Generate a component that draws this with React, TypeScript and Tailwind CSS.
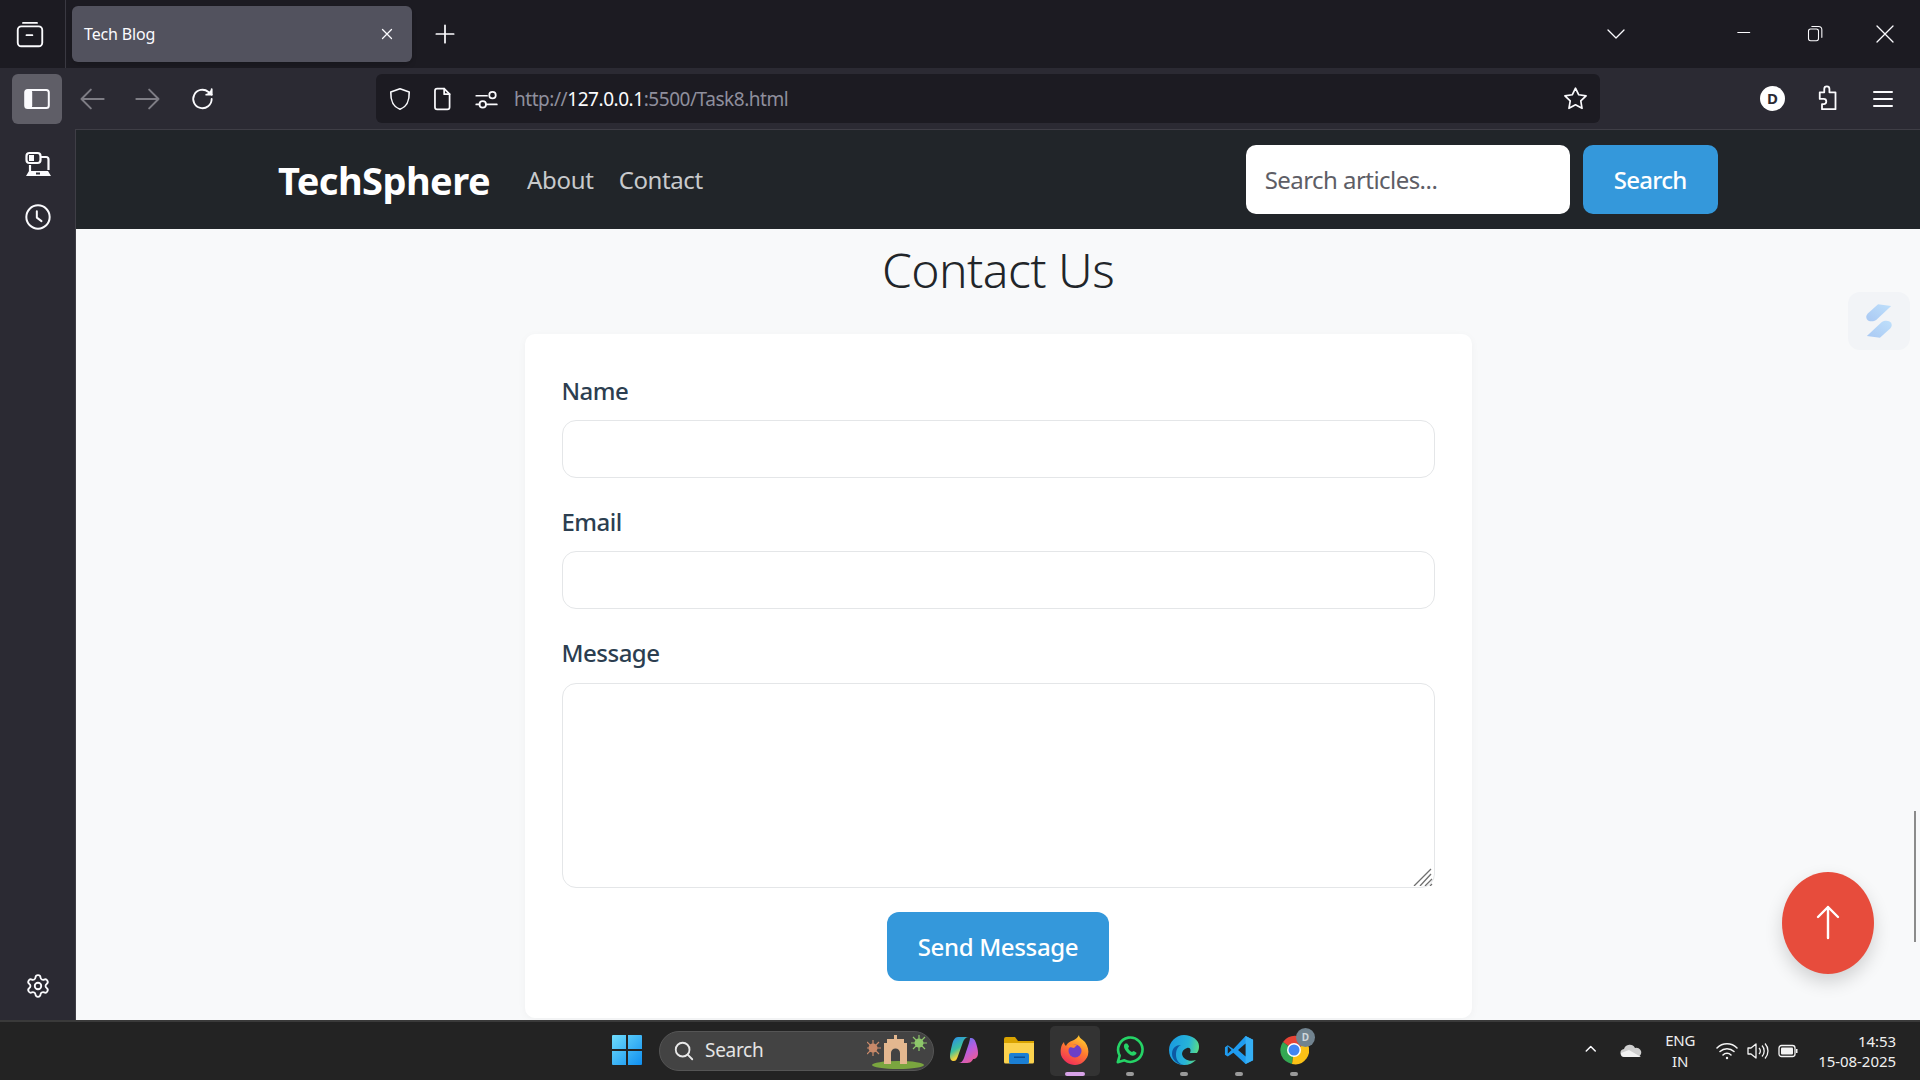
import React from "react";
import { Settings } from "lucide-react";

const font = { fontFamily: '"Noto Sans", "Open Sans", sans-serif' };

function I({ w = 24, children, vb = "0 0 24 24", sw = 1.6, color = "#fbfbfe", className = "" }: { w?: number; children: React.ReactNode; vb?: string; sw?: number; color?: string; className?: string }) {
  return (
    <svg width={w} height={w} viewBox={vb} fill="none" stroke={color} strokeWidth={sw} strokeLinecap="round" strokeLinejoin="round" className={className}>
      {children}
    </svg>
  );
}

function TabStrip() {
  return (
    <div className="flex h-[68px] shrink-0 items-center bg-[#1c1b22] text-[#fbfbfe]">
      <div className="flex h-full w-[66px] shrink-0 items-center justify-center border-r border-[#3a3942] pr-[6px]">
        <I w={28}>
          <rect x="3" y="7.500" width="21" height="17" rx="3" transform="translate(-1.500 -2)" />
          <path d="M6 2.500h12M9 13h5" />
        </I>
      </div>
      <div className="ml-[6px] flex h-[56px] w-[340px] items-center justify-between rounded-[6px] bg-[#52525e] pl-[12px] pr-[16px] shadow-md">
        <span className="text-[16px] tracking-[-0.15px]">Tech Blog</span>
        <I w={18} sw={1.7}><path d="M6 6l12 12M18 6L6 18" /></I>
      </div>
      <div className="ml-[20px]">
        <I w={26}><path d="M12 4v16M4 12h16" /></I>
      </div>
      <div className="flex-1" />
      <I w={24} sw={1.3} className="mr-[109px]"><path d="M4 8l8 8 8-8" /></I>
      <I w={18} sw={1.4} className="mr-[51px]"><path d="M1 10h16" /></I>
      <I w={20} sw={1.3} className="mr-[47px]">
        <rect x="3" y="6" width="12" height="14" rx="2.500" />
        <path d="M7 3h8a4 4 0 0 1 4 4v9" />
      </I>
      <I w={24} sw={1.3} className="mr-[23px]"><path d="M4 4l16 16M20 4L4 20" /></I>
    </div>
  );
}

function Toolbar() {
  return (
    <div className="flex h-[61px] shrink-0 items-center bg-[#2b2a33] text-[#fbfbfe]">
      <div className="ml-[12px] flex h-[50px] w-[50px] items-center justify-center rounded-[6px] bg-[#5f5e67]">
        <svg width="26" height="22" viewBox="0 0 26 22" fill="none">
          <rect x="1.200" y="2" width="23.600" height="18" rx="2.500" stroke="#fbfbfe" strokeWidth="2" />
          <rect x="1.200" y="2" width="7" height="18" rx="2" fill="#fbfbfe" />
        </svg>
      </div>
      <I w={28} color="#7e7d85" sw={1.7} className="ml-[16px]"><path d="M22 12H3M11 4l-8 8 8 8" /></I>
      <I w={28} color="#7e7d85" sw={1.7} className="ml-[28px]"><path d="M2 12h19M13 4l8 8-8 8" /></I>
      <I w={26} sw={1.7} className="ml-[28px]">
        <path d="M20 12a8.500 8.500 0 1 1-3-6.500L20 8" />
        <path d="M20 3v5h-5" fill="#fbfbfe" />
      </I>
      <div className="ml-[160px] flex h-[49px] w-[1224px] items-center rounded-[6px] bg-[#1c1b22] text-[19px]">
        <I w={26} sw={1.500} className="ml-[11px]">
          <path d="M12 2.500l8.500 3c.2 7-1 13-8.500 16-7.500-3-8.700-9-8.500-16z" />
        </I>
        <I w={26} sw={1.600} className="ml-[16px]">
          <path d="M5.500 4.500a2 2 0 0 1 2-2h6.500l5 5v12a2 2 0 0 1-2 2h-9.500a2 2 0 0 1-2-2z" />
          <path d="M14 2.500v5h5" />
        </I>
        <I w={26} sw={1.600} className="ml-[18px]">
          <path d="M3 9h10M3 17h3M12 17h10" />
          <circle cx="18" cy="8.500" r="3" />
          <circle cx="9" cy="17" r="3" />
        </I>
        <div className="ml-[15px] mt-[2px] tracking-[-0.45px]">
          <span className="text-[#8f8f9d]">http://</span>
          <span className="text-[#fbfbfe]">127.0.0.1</span>
          <span className="text-[#8f8f9d]">:5500/Task8.html</span>
        </div>
        <div className="flex-1" />
        <I w={27} sw={1.500} className="mr-[11px]">
          <path d="M12 2.800l2.900 5.900 6.500.9-4.700 4.600 1.100 6.500-5.800-3.100-5.800 3.100 1.100-6.500-4.700-4.600 6.500-.9z" />
        </I>
      </div>
      <div className="flex-1" />
      <div className="mr-[28px] flex h-[25px] w-[25px] items-center justify-center rounded-full bg-white text-[15px] font-bold text-[#2b2a33]">D</div>
      <I w={27} sw={1.600} className="mr-[31px]">
        <path d="M10 3.500a2.300 2.300 0 0 1 4.600 0v3h5.400v15h-12v-4.500h1.500a2.300 2.300 0 0 0 0-4.600h-3.500v-5.900h4z" />
      </I>
      <I w={24} sw={2} className="mr-[25px]"><path d="M3 5h18M3 12h18M3 19h18" /></I>
    </div>
  );
}

function Sidebar() {
  return (
    <div className="flex w-[76px] shrink-0 flex-col items-center border-r border-[#3f3e46] bg-[#2b2a33] pb-[21px] pt-[21px] text-[#fbfbfe]">
      <svg width="28" height="28" viewBox="0 0 28 28" fill="none" stroke="#fbfbfe" strokeWidth="2.200">
        <rect x="2.500" y="3" width="14" height="10" rx="3" />
        <rect x="5" y="5" width="5" height="6" fill="#fbfbfe" stroke="none" />
        <path d="M17 7h5a2.500 2.500 0 0 1 2.500 2.500V20M6 15v6" />
        <path d="M2 26l3-5h19l3 5z" fill="#fbfbfe" stroke="none" />
        <rect x="12" y="22.500" width="4" height="2" fill="#2b2a33" stroke="none" />
      </svg>
      <I w={28} sw={1.700} className="mt-[25px]">
        <circle cx="12" cy="12" r="10" />
        <path d="M11 7v5.500l4 3" />
      </I>
      <div className="flex-1" />
      <Settings size={26} strokeWidth={1.700} color="#fbfbfe" />
    </div>
  );
}

function Navbar() {
  return (
    <div className="flex h-[100px] shrink-0 items-center border-t border-[#3f3e46] bg-[#212529] pl-[202px]">
      <span className="text-[38px] font-bold leading-none tracking-[-0.55px] text-white">TechSphere</span>
      <span className="ml-[37px] text-[24px] tracking-[-0.3px] text-[#c8cacc]">About</span>
      <span className="ml-[25px] text-[24px] tracking-[-0.4px] text-[#c8cacc]">Contact</span>
      <div className="ml-[543px] flex h-[69px] w-[324px] items-center rounded-[10px] bg-white pl-[19px] text-[24px] tracking-[-0.55px] text-[#5e5e66]">Search articles...</div>
      <button className="ml-[13px] h-[69px] w-[135px] rounded-[10px] bg-[#3498db] text-[24px] font-medium tracking-[-0.7px] text-white">Search</button>
    </div>
  );
}

function Field({ label, mt }: { label: string; mt: string }) {
  return (
    <div className={mt}>
      <label className="block text-[24px] font-medium leading-[36px] tracking-[-0.5px] text-[#2c3e50]">{label}</label>
      <input className="mt-[11px] block h-[58px] w-full rounded-[14px] border border-[#e4e6e8] bg-white outline-none" />
    </div>
  );
}

function Main() {
  return (
    <div className="relative flex min-w-0 flex-1 flex-col overflow-hidden bg-[#f8f9fa]">
      <Navbar />
      <div className="flex flex-1 flex-col items-center overflow-hidden">
        <h1 className="mt-[6px] h-[70px] text-[48px] font-[350] leading-[70px] tracking-[-0.55px] text-[#212529]">Contact Us</h1>
        <div className="mt-[29px] w-[947px] shrink-0 rounded-[10px] bg-white px-[37px] pb-[37px] pt-[39px] shadow-[0_2px_8px_rgba(0,0,0,0.04)]">
          <Field label="Name" mt="mt-0" />
          <Field label="Email" mt="mt-[26px]" />
          <div className="mt-[26px]">
            <label className="block text-[24px] font-medium leading-[36px] tracking-[-0.5px] text-[#2c3e50]">Message</label>
            <div className="relative mt-[12px]">
              <textarea className="block h-[205px] w-full resize-none rounded-[14px] border border-[#e4e6e8] bg-white outline-none" />
              <svg width="20" height="18" viewBox="0 0 20 18" stroke="#6f6f6f" strokeWidth="1.300" className="absolute bottom-[2px] right-[2px]">
                <path d="M1 18L18 1M7 18L18 6M12 18l7-7M17 18l2-2" />
              </svg>
            </div>
          </div>
          <div className="mt-[24px] flex justify-center">
            <button className="h-[69px] w-[222px] rounded-[12px] bg-[#3498db] text-[24px] font-medium tracking-[-0.35px] text-white">Send Message</button>
          </div>
        </div>
      </div>
      {/* floating extension tab */}
      <div className="absolute left-[1772px] top-[163px] flex h-[58px] w-[62px] items-center justify-center rounded-[12px] bg-[#f2f4f7]">
        <svg width="28" height="36" viewBox="0 0 30 38">
          <defs>
            <linearGradient id="ext" x1="1" y1="0" x2="0" y2="1">
              <stop offset="0" stopColor="#bfe0fb" />
              <stop offset="1" stopColor="#a9c8f3" />
            </linearGradient>
          </defs>
          <path d="M14 1l14 2L12 18c-3 2-8 2-10-1-1-2-1-4 1-6z" fill="url(#ext)" />
          <path d="M16 37L2 35l16-15c3-2 8-2 10 1 1 2 1 4-1 6z" fill="url(#ext)" />
        </svg>
      </div>
      {/* back to top */}
      <div className="absolute left-[1706px] top-[743px] flex h-[102px] w-[92px] items-center justify-center rounded-[50%] bg-[#e74c3c] shadow-[0_8px_18px_rgba(0,0,0,0.16)]">
        <svg width="26" height="36" viewBox="0 0 26 36" fill="none" stroke="white" strokeWidth="2.400" strokeLinecap="round" strokeLinejoin="round">
          <path d="M13 2v31M3 12L13 2l10 10" />
        </svg>
      </div>
      {/* scrollbar thumb */}
      <div className="absolute left-[1838px] top-[682px] h-[131px] w-[2px] bg-[#8b8b8b]" />
    </div>
  );
}

function Taskbar() {
  return (
    <div className="flex h-[60px] shrink-0 items-center border-t-2 border-[#3a3a3a] bg-[#232323] text-white">
      <svg width="30" height="30" viewBox="0 0 30 30" className="ml-[612px] mb-[2px]">
        <defs>
          <linearGradient id="win" x1="0" y1="0" x2="1" y2="1">
            <stop offset="0" stopColor="#6fdcfb" />
            <stop offset="1" stopColor="#0f8ff0" />
          </linearGradient>
        </defs>
        <path d="M0 1a1 1 0 0 1 1-1h13v14H0zM16 0h13a1 1 0 0 1 1 1v13H16zM0 16h14v14H1a1 1 0 0 1-1-1zM16 16h14v13a1 1 0 0 1-1 1H16z" fill="url(#win)" />
      </svg>
      <div className="relative ml-[17px] mb-[1px] flex h-[40px] w-[275px] items-center rounded-full border border-[#555] bg-[#434343] pl-[13px]">
        <I w={22} sw={2} color="#e8e8e8"><circle cx="10.500" cy="10.500" r="7.500" /><path d="M16 16l5 5" /></I>
        <span className="ml-[10px] text-[19px] tracking-[-0.3px] text-[#e4e4e4]">Search</span>
        <svg width="60" height="36" viewBox="0 0 60 36" className="absolute right-[6px] top-[1px]">
          <ellipse cx="31" cy="32" rx="26" ry="4" fill="#7aa53f" />
          <g fill="#c98a6a">
            <circle cx="6" cy="15" r="4.500" />
            <path d="M6 7v16M-2 15h16M0 9l12 12M12 9L0 21" stroke="#c98a6a" strokeWidth="1.200" />
          </g>
          <g fill="#8dc76a">
            <circle cx="52" cy="10" r="4.500" />
            <path d="M52 2v16M44 10h16M46 4l12 12M58 4L46 16" stroke="#8dc76a" strokeWidth="1.200" />
          </g>
          <path d="M17 31V10h3V6h7V2h3v4h7v4h3v21h-7V20a4 4 0 0 0-9 0v11z" fill="#e3b78f" />
        </svg>
      </div>
      {/* copilot */}
      <svg width="30" height="30" viewBox="0 0 30 30" className="ml-[15px] mb-[2px]">
        <defs>
          <linearGradient id="cp1" x1="0.2" y1="0" x2="0.7" y2="1">
            <stop offset="0" stopColor="#2a8fe8" />
            <stop offset="0.45" stopColor="#3cc0a0" />
            <stop offset="0.75" stopColor="#f3d23a" />
            <stop offset="1" stopColor="#f28a2e" />
          </linearGradient>
          <linearGradient id="cp2" x1="0.2" y1="0" x2="0.8" y2="1">
            <stop offset="0" stopColor="#4f7bf0" />
            <stop offset="0.5" stopColor="#b85ce0" />
            <stop offset="1" stopColor="#f25c8c" />
          </linearGradient>
        </defs>
        <path d="M9 2h11c-3 0-5 2-6 5L9 21c-1 3-2 5-4 5-3 0-4-2-4-5 0-3 1-7 2-11 1-5 3-8 6-8z" fill="url(#cp1)" />
        <path d="M21 3c4 0 5 2 6 5 1 3 2 7 2 10 0 4-2 6-5 6 0 0-1 4-6 4H9c3 0 5-2 6-5l5-15c.5-2 1-4 1-5z" fill="url(#cp2)" />
      </svg>
      {/* explorer */}
      <svg width="32" height="28" viewBox="0 0 32 28" className="ml-[24px] mb-[2px]">
        <path d="M1 3a2 2 0 0 1 2-2h9l3 4h16v20H1z" fill="#d9a300" />
        <path d="M1 7h30v19a1.500 1.500 0 0 1-1.500 1.500h-27A1.500 1.500 0 0 1 1 26z" fill="#fbd24e" />
        <rect x="6" y="17" width="20" height="11" rx="2" fill="#1b7fd4" />
        <rect x="11" y="20.500" width="11" height="1.500" fill="#0a4f94" />
      </svg>
      {/* firefox tile */}
      <div className="relative ml-[15px] flex h-[50px] w-[50px] items-center justify-center rounded-[5px] bg-[#333] pb-[2px]">
        <svg width="32" height="32" viewBox="0 0 32 32">
          <defs>
            <linearGradient id="ff" x1="0.7" y1="0" x2="0.2" y2="1">
              <stop offset="0" stopColor="#ffd02f" />
              <stop offset="0.45" stopColor="#ff7a2f" />
              <stop offset="1" stopColor="#f0265f" />
            </linearGradient>
          </defs>
          <path d="M20 1c0 3 3 4 6 7 3 4 4 9 3 13-2 6-7 10-13 10S4 27 2 21C1 16 2 11 5 8c0 2 1 3 2 4 1-3 5-5 8-6 2-1 4-3 5-5z" fill="url(#ff)" />
          <circle cx="16" cy="17" r="6.500" fill="#6c3fc7" />
          <path d="M8 12c3-2 7-2 10-1l-3 3c-3-1-5 0-7-2z" fill="#ff8a2f" />
        </svg>
        <div className="absolute bottom-0 h-[4px] w-[20px] rounded-full bg-[#d7a3e8]" />
      </div>
      {/* whatsapp */}
      <div className="relative ml-[15px] flex h-[50px] w-[30px] items-center justify-center pb-[2px]">
        <svg width="32" height="32" viewBox="0 0 32 32" fill="none">
          <path d="M3 29l2-7a13 13 0 1 1 5 5z" stroke="#25d366" strokeWidth="2.800" strokeLinejoin="round" />
          <path d="M11 9c-2 1-2 4 0 7s5 6 8 6c2 0 4-1 4-3l-3-2-2 1c-2-1-3-2-4-4l1-2-2-3z" fill="#25d366" />
        </svg>
        <div className="absolute bottom-0 h-[4px] w-[8px] rounded-full bg-[#9a9a9a]" />
      </div>
      {/* edge */}
      <div className="relative ml-[24px] flex h-[50px] w-[30px] items-center justify-center pb-[2px]">
        <svg width="30" height="32" viewBox="0 0 30 32">
          <defs>
            <linearGradient id="ed" x1="0" y1="0.4" x2="1" y2="0.6">
              <stop offset="0" stopColor="#1a9be0" />
              <stop offset="0.6" stopColor="#27b3d8" />
              <stop offset="1" stopColor="#5fe07e" />
            </linearGradient>
          </defs>
          <path d="M15 1C7 1 0 8 0 16c0 9 7 15 15 15 5 0 9-2 12-5-6 2-13 0-14-6 0-3 2-5 5-6 4-1 4 3 3 5h7c2-3 2-5 2-7C30 6 23 1 15 1z" fill="url(#ed)" />
          <path d="M3 20c0-6 4-9 9-9-4 2-5 6-5 10 0 5 3 9 8 10-6 0-12-5-12-11z" fill="#0c59a4" />
        </svg>
        <div className="absolute bottom-0 h-[4px] w-[8px] rounded-full bg-[#9a9a9a]" />
      </div>
      {/* vscode */}
      <div className="relative ml-[25px] flex h-[50px] w-[30px] items-center justify-center pb-[2px]">
        <svg width="32" height="32" viewBox="0 0 32 32">
          <path d="M23 1l8 4v22l-8 4-13-12-6 4-3-2v-8l3-2 6 4z" fill="#1f9cf0" />
          <path d="M23 1l8 4v22l-8 4z" fill="#35aff5" />
          <path d="M23 9l-8 7 8 7z" fill="#232323" />
          <path d="M4 12l4 4-4 4z" fill="#232323" />
        </svg>
        <div className="absolute bottom-0 h-[4px] w-[8px] rounded-full bg-[#9a9a9a]" />
      </div>
      {/* chrome */}
      <div className="relative ml-[25px] flex h-[50px] w-[30px] items-center justify-center pb-[2px]">
        <svg width="30" height="30" viewBox="0 0 30 30">
          <path d="M15 15L4 7a14 14 0 0 1 24 1z" fill="#e64335" />
          <path d="M15 15l-11-8a14 14 0 0 0 9 22z" fill="#34a853" />
          <path d="M15 15l13-7a14 14 0 0 1-15 21z" fill="#fbc116" />
          <circle cx="15" cy="15" r="7" fill="#fff" />
          <circle cx="15" cy="15" r="5.500" fill="#4285f4" />
        </svg>
        <div className="absolute right-[-6px] top-[2px] flex h-[19px] w-[19px] items-center justify-center rounded-full bg-[#71838f] text-[10px] font-bold text-[#cfd6da]">D</div>
        <div className="absolute bottom-0 h-[4px] w-[8px] rounded-full bg-[#9a9a9a]" />
      </div>
      <div className="flex-1" />
      {/* tray */}
      <I w={18} sw={2} className="mr-[18px]"><path d="M3 13l6-6 6 6" transform="translate(0 -1)" /></I>
      <svg width="22" height="14" viewBox="0 0 22 14" className="mr-[23px]">
        <path d="M5 13a4 4 0 0 1-1-8 6 6 0 0 1 11-1 4.500 4.500 0 0 1 3 9z" fill="#cfcfcf" />
        <path d="M1 9l8-3 12 7H5a4 4 0 0 1-4-4z" fill="#f2f2f2" />
      </svg>
      <div className="mr-[21px] text-center text-[15px] leading-[21px] tracking-[-0.2px] text-[#eee]">
        <div>ENG</div>
        <div>IN</div>
      </div>
      <svg width="22" height="18" viewBox="0 0 22 18" fill="none" stroke="#f4f4f4" strokeWidth="1.500" strokeLinecap="round" className="mr-[9px]">
        <path d="M1 6a14 14 0 0 1 20 0M4 9.500a10 10 0 0 1 14 0M7 13a5.500 5.500 0 0 1 8 0" />
        <circle cx="11" cy="16" r="1.200" fill="#f4f4f4" stroke="none" />
      </svg>
      <svg width="22" height="18" viewBox="0 0 22 18" fill="none" stroke="#f4f4f4" strokeWidth="1.300" strokeLinejoin="round" className="mr-[9px]">
        <path d="M1 6h3l5-4v14l-5-4H1z" />
        <path d="M12 6a4 4 0 0 1 0 6M15 3.500a8 8 0 0 1 0 11M18 1.500a11 11 0 0 1 0 15" />
      </svg>
      <svg width="20" height="14" viewBox="0 0 20 14" className="mr-[20px]">
        <rect x="1" y="1.500" width="16" height="11" rx="2.500" fill="none" stroke="#f4f4f4" strokeWidth="1.300" />
        <rect x="3" y="3.500" width="12" height="7" rx="1" fill="#f4f4f4" />
        <rect x="18" y="5" width="1.500" height="4" fill="#f4f4f4" />
      </svg>
      <div className="mr-[24px] text-right text-[15px] leading-[20px] tracking-[-0.05px] text-[#f0f0f0]">
        <div>14:53</div>
        <div>15-08-2025</div>
      </div>
    </div>
  );
}

export default function App() {
  return (
    <div className="flex h-[1080px] w-[1920px] flex-col overflow-hidden" style={font}>
      <TabStrip />
      <Toolbar />
      <div className="flex min-h-0 flex-1">
        <Sidebar />
        <Main />
      </div>
      <Taskbar />
    </div>
  );
}
